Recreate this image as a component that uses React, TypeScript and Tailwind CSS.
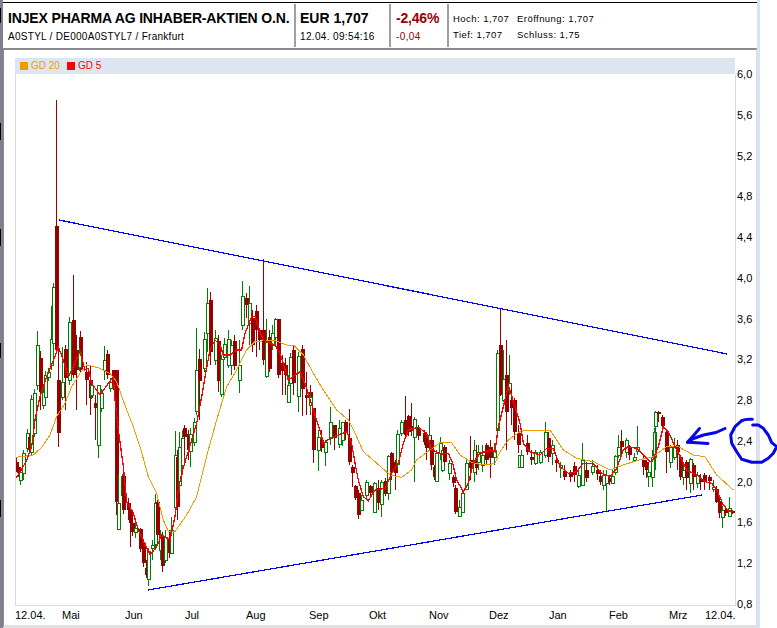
const blocks = [
  { gap: 8, h: 15 },
  { gap: 100, h: 17 },
  { gap: 89, h: 17 },
  { gap: 97, h: 15 },
  { gap: 142, h: 17 },
];

const yLabels = ["6,0", "5,6", "5,2", "4,8", "4,4", "4,0", "3,6", "3,2", "2,8", "2,4", "2,0", "1,6", "1,2", "0,8"];

const xLabels = [
  { text: "12.04.", w: 47 },
  { text: "Mai", w: 63 },
  { text: "Jun", w: 60 },
  { text: "Jul", w: 61 },
  { text: "Aug", w: 63 },
  { text: "Sep", w: 60 },
  { text: "Okt", w: 60 },
  { text: "Nov", w: 60 },
  { text: "Dez", w: 60 },
  { text: "Jan", w: 60 },
  { text: "Feb", w: 60 },
  { text: "Mrz", w: 36 },
  { text: "12.04.", w: 30 },
];

// [up, x, bodyTop, bodyBottom, wickTop, wickBottom] in page pixels
type Candle = [0 | 1, number, number, number, number?, number?];

const raw: Candle[] = [
  [0, 16, 462, 468], [0, 18, 467, 473], [1, 20, 472, 480, 472, 485], [1, 23, 453, 473, 450, 480], [1, 27, 433, 448], [0, 29, 437, 450], [1, 31, 399, 452], [1, 34, 393, 433], [1, 37, 345, 385, 331, 390], [0, 40, 358, 392, 351, 410],
  [1, 43, 392, 405], [1, 45, 375, 397], [1, 48, 372, 377], [1, 51, 339, 365, 306, 370], [1, 53, 287, 343], [0, 56, 226, 350, 100, 350], [0, 58, 380, 433, 350, 447], [1, 62, 382, 397, 347, 400], [0, 65, 349, 378, 345, 410], [1, 69, 322, 380, 317, 385], [0, 73, 320, 375, 275, 378], [0, 76, 350, 370, 335, 410], [0, 80, 337, 370, 331, 372], [1, 79, 352, 367], [0, 86, 372, 380, 362, 405],
  [0, 90, 380, 398, 365, 415], [1, 91, 385, 395], [0, 95, 403, 408, 395, 440], [1, 98, 385, 445, 395, 458], [1, 101, 393, 408], [1, 104, 360, 370, 346, 380], [0, 107, 354, 375], [1, 110, 382, 388], [0, 113, 370, 385, 370, 390], [0, 116, 370, 502, 370, 515], [1, 118, 503, 529, 475, 530], [1, 122, 476, 495, 474, 500], [0, 123, 476, 510], [0, 128, 503, 510, 498, 520], [0, 130, 510, 523, 505, 547],
  [0, 132, 523, 532], [1, 135, 528, 532, 520, 538], [0, 140, 529, 549, 528, 552], [0, 143, 543, 563], [0, 146, 568, 575, 560, 578], [1, 148, 551, 579, 548, 586], [1, 152, 545, 548, 540, 560], [1, 155, 503, 544, 494, 550], [0, 157, 502, 535, 500, 540], [1, 160, 535, 550, 530, 560], [0, 162, 536, 566, 532, 572], [1, 165, 537, 560, 530, 563], [0, 169, 538, 553, 530, 558], [1, 171, 530, 553, 517, 554], [1, 175, 455, 507, 431, 510], [0, 177, 457, 507, 450, 520], [1, 179, 447, 485, 432, 492], [1, 182, 438, 465, 430, 475], [0, 184, 428, 437, 425, 455], [0, 188, 434, 450, 430, 460], [1, 190, 434, 451, 428, 467], [1, 194, 422, 442],
  [1, 196, 370, 411, 328, 415], [0, 199, 359, 381, 349, 420], [1, 204, 339, 368, 332, 372], [1, 207, 303, 333, 288, 352], [0, 210, 300, 352, 292, 365], [1, 215, 338, 360, 330, 365], [0, 218, 341, 381, 335, 392], [1, 221, 359, 394, 355, 397], [1, 224, 344, 357, 338, 360], [1, 228, 339, 365, 330, 368], [1, 231, 345, 365, 340, 375], [0, 234, 341, 366, 335, 370], [1, 239, 365, 380, 340, 393], [1, 242, 296, 325, 281, 330], [0, 246, 298, 305, 293, 318], [1, 249, 303, 323, 286, 345],
  [0, 252, 318, 345, 310, 352], [0, 256, 311, 330, 305, 357], [0, 259, 330, 340, 330, 350], [0, 263, 330, 360, 259, 365], [1, 266, 342, 376, 319, 378], [0, 269, 337, 369, 330, 372], [1, 272, 333, 345, 325, 350], [1, 275, 319, 337, 318, 345], [0, 278, 319, 375, 319, 378], [0, 282, 363, 371, 355, 395], [0, 285, 365, 375, 358, 395], [1, 288, 385, 402, 375, 403], [1, 290, 357, 383], [0, 293, 350, 383, 345, 395], [1, 298, 356, 396, 352, 412], [0, 302, 349, 389, 345, 416], [0, 306, 395, 398, 372, 415], [0, 310, 392, 403, 385, 415], [1, 310, 397, 405, 392, 412], [0, 313, 408, 450, 408, 463], [1, 318, 437, 450, 430, 471], [0, 321, 440, 448, 430, 452], [1, 325, 442, 452, 440, 466],
  [1, 330, 422, 438, 407, 445], [0, 334, 425, 438, 425, 450], [1, 339, 428, 444, 420, 448], [1, 342, 422, 440, 422, 446], [0, 345, 422, 432, 420, 440], [0, 349, 438, 462, 409, 465], [0, 352, 467, 473, 465, 487], [0, 355, 486, 498, 485, 500], [0, 358, 493, 515, 490, 519], [1, 361, 500, 510, 495, 510], [1, 366, 482, 495, 480, 498], [0, 370, 486, 493, 485, 498], [1, 374, 483, 512, 482, 513], [0, 378, 488, 503, 480, 510], [1, 381, 482, 504, 480, 517], [0, 385, 481, 494, 478, 496], [1, 388, 456, 493, 455, 500], [0, 391, 453, 472, 452, 480], [0, 395, 462, 473, 460, 490], [1, 397, 434, 464, 430, 470], [1, 401, 422, 433, 420, 436],
  [0, 405, 420, 435, 396, 438], [0, 408, 416, 432, 415, 436], [0, 411, 426, 431, 403, 436], [1, 414, 419, 437, 417, 482], [0, 418, 428, 436, 425, 440], [0, 424, 433, 442, 430, 445], [0, 426, 436, 448, 433, 460], [1, 429, 435, 440, 417, 450], [0, 431, 440, 465, 435, 470], [0, 434, 467, 477, 465, 480], [1, 436, 453, 481, 450, 482], [1, 440, 443, 453, 437, 460], [1, 442, 450, 470, 442, 472], [0, 444, 447, 462, 445, 465], [1, 449, 463, 473, 460, 480], [0, 453, 477, 483, 475, 487], [0, 455, 488, 512, 485, 514], [1, 459, 507, 516, 500, 517], [1, 462, 493, 512, 490, 513], [1, 466, 463, 489, 460, 490], [0, 470, 460, 468, 436, 480], [1, 474, 450, 472, 440, 482], [0, 476, 458, 468, 445, 475], [1, 478, 452, 462, 445, 470], [1, 482, 455, 465, 445, 472], [0, 486, 445, 460, 443, 465], [0, 490, 447, 458, 440, 478], [1, 494, 450, 457, 443, 465],
  [1, 497, 353, 430, 350, 432], [0, 500, 345, 395, 308, 396], [1, 503, 379, 400, 350, 402], [0, 506, 375, 412, 340, 450], [1, 509, 383, 390, 355, 395], [0, 511, 400, 408, 388, 425], [0, 514, 400, 432, 398, 440], [0, 518, 433, 445, 425, 453], [1, 519, 455, 467, 455, 467], [1, 521, 455, 467, 450, 468], [0, 527, 443, 452, 435, 455], [0, 531, 457, 460, 450, 465], [1, 535, 452, 463, 450, 465], [1, 540, 452, 462, 450, 464], [1, 545, 432, 455, 422, 458], [0, 548, 438, 457, 432, 462], [1, 552, 445, 453, 440, 465], [0, 556, 460, 463, 455, 472], [1, 560, 465, 467, 462, 478],
  [0, 564, 471, 477, 465, 480], [0, 570, 473, 477, 470, 482], [0, 574, 466, 475, 462, 482], [1, 578, 475, 486, 470, 488], [1, 582, 460, 485, 443, 486], [0, 586, 470, 478, 462, 482], [1, 592, 466, 472, 460, 475], [0, 597, 470, 474, 465, 480], [0, 600, 476, 482, 470, 485], [1, 603, 475, 485, 470, 490], [1, 606, 475, 483, 470, 512], [0, 609, 478, 482, 475, 485], [1, 612, 476, 483, 470, 484], [1, 615, 456, 472, 455, 475], [1, 618, 447, 455, 435, 458], [0, 621, 441, 447, 430, 455], [1, 626, 440, 452, 438, 458], [0, 629, 447, 455, 445, 460], [1, 634, 457, 460, 453, 462], [1, 637, 447, 451, 426, 455], [0, 643, 460, 467, 455, 475], [0, 646, 462, 470, 460, 478], [1, 648, 472, 476, 465, 487], [1, 652, 457, 477, 450, 487],
  [1, 654, 432, 457, 428, 460], [1, 655, 412, 426, 411, 470], [0, 658, 412, 414, 411, 422], [0, 662, 417, 426, 415, 430], [0, 666, 432, 452, 430, 473], [1, 670, 447, 462, 445, 468], [1, 674, 447, 457, 438, 460], [0, 677, 445, 452, 440, 470], [0, 680, 457, 477, 455, 480], [1, 683, 470, 477, 465, 485], [0, 686, 462, 478, 460, 490], [1, 690, 459, 483, 458, 493], [0, 693, 465, 477, 463, 490], [1, 697, 475, 483, 472, 488], [0, 700, 480, 482, 474, 490], [0, 704, 475, 482, 473, 490], [0, 709, 477, 481, 475, 490], [1, 713, 487, 489, 480, 492], [0, 716, 489, 502, 486, 503], [0, 719, 501, 513, 498, 518], [1, 722, 510, 517, 506, 528], [0, 725, 510, 513, 508, 516], [1, 729, 508, 516, 497, 517], [0, 732, 511, 513, 510, 514],
];

const zoom = (ox: number, oy: number, pts: number[][]) => pts.map(([x, y]) => `${ox + x / 3},${oy + y / 3}`).join(" ");

const redLine = [
  zoom(0, 340, [[46, 415], [60, 398], [80, 360], [95, 320], [105, 240], [120, 170], [140, 110], [165, 50], [175, 20], [190, 60], [205, 110], [215, 90], [240, 35], [255, 90], [265, 85], [275, 130], [300, 165], [325, 130], [340, 110], [345, 180], [355, 270], [370, 380], [380, 485], [400, 520], [415, 570], [450, 645], [470, 620], [485, 585], [510, 600], [525, 530], [535, 450], [545, 400], [575, 300], [590, 250]]),
  zoom(180, 250, [[65, 440], [75, 380], [90, 300], [105, 270], [120, 285], [130, 315], [150, 315], [170, 300], [185, 300], [195, 250], [215, 200], [225, 200], [240, 245], [250, 270], [270, 280]]),
  zoom(260, 340, [[45, 15], [60, 40], [70, 70], [85, 120], [120, 95], [135, 130], [160, 210], [180, 270], [190, 310], [210, 295], [235, 285], [260, 275], [275, 310], [285, 370], [295, 420], [310, 470], [325, 482], [345, 450], [375, 445], [395, 400], [415, 370], [430, 310], [445, 270], [475, 262], [500, 280], [515, 330], [545, 342], [565, 340], [578, 370], [590, 420], [610, 455], [625, 430], [640, 370], [660, 340], [690, 330], [705, 335], [715, 260], [735, 180], [745, 135], [765, 200], [780, 250]]),
  zoom(520, 340, [[10, 310], [30, 335], [60, 345], [80, 325], [100, 325], [120, 380], [145, 400], [170, 395], [190, 370], [220, 370], [245, 400], [270, 410], [290, 385], [310, 330], [325, 320], [350, 325], [375, 350], [395, 368], [415, 320], [430, 260], [445, 275], [465, 320], [480, 350], [500, 390], [530, 405], [555, 425], [575, 430], [590, 450], [610, 495], [625, 512], [640, 515]]),
].join(" ");

const orangeLine = [
  zoom(0, 340, [[46, 352], [100, 345], [125, 322], [150, 285], [170, 230], [195, 190], [215, 140], [240, 100], [260, 75], [300, 85], [330, 100], [350, 125], [380, 210], [400, 260], [420, 320], [445, 410], [470, 460], [490, 540], [505, 575], [525, 575], [560, 525], [590, 470], [610, 390], [625, 330], [650, 240], [680, 140], [710, 90], [740, 30], [765, 5]]),
  zoom(260, 340, [[40, 0], [80, 15], [100, 15], [130, 45], [160, 100], [190, 150], [230, 210], [265, 240], [290, 290], [310, 335], [345, 365], [390, 405], [425, 412], [455, 390], [470, 360], [510, 330], [540, 308], [575, 308], [600, 345], [640, 370], [680, 375], [705, 370], [720, 335], [745, 300], [780, 275]]),
  zoom(520, 340, [[20, 270], [90, 270], [130, 330], [170, 355], [220, 365], [270, 390], [310, 375], [350, 362], [400, 350], [440, 320], [475, 320], [520, 345], [555, 350], [590, 405], [640, 450]]),
].join(" ");

function Chart() {
  return (
    <svg viewBox="16 74 719 531" className="block w-[719px] h-[531px]">
      <g shapeRendering="crispEdges">
        {raw.map(([up, x, top, bottom, wickTop, wickBottom], i) => {
          const color = up ? "#008000" : "#990000";
          const wt = wickTop ?? top - 4;
          const wb = wickBottom ?? bottom + 4;
          return (
            <g key={i}>
              <line x1={x + 0.5} x2={x + 0.5} y1={wt} y2={wb} stroke={color} strokeWidth={1} />
              {up ? (
                <rect x={x - 1} y={top} width={3} height={bottom - top} fill="#ffffff" stroke={color} strokeWidth={1} />
              ) : (
                <rect x={x - 1} y={top} width={3.5} height={bottom - top} fill={color} />
              )}
            </g>
          );
        })}
      </g>
      <g fill="none" shapeRendering="crispEdges">
        <polyline points={orangeLine} stroke="#f39a00" strokeWidth={1} />
        <polyline points={redLine} stroke="#ff0000" strokeWidth={1.3} />
      </g>
      <g stroke="#0000ff" strokeWidth={1.2} shapeRendering="crispEdges">
        <line x1={59} y1={220} x2={727} y2={354} />
        <line x1={148} y1={590} x2={702} y2={495} />
      </g>
    </svg>
  );
}

export default function App() {
  return (
    <div className="relative flex w-[777px] h-[628px] overflow-hidden bg-white text-black font-['Liberation_Sans',Arial,sans-serif]">
      <div className="w-[3px] h-full bg-[#7f7f8e] flex flex-col">
        {blocks.map((b, i) => (
          <div key={i} className="w-[1px] bg-black" style={{ marginTop: b.gap, height: b.h }} />
        ))}
      </div>

      <div className="w-[754px] h-full flex flex-col">
        <div className="h-[3px] border-b border-black mt-0 shrink-0" />
        <div className="h-[45px] flex shrink-0">
          <div className="w-[293px] pl-[5px] pt-[6px] border-r-2 border-[#a0a0a0] my-[1px]">
            <div className="text-[14px] leading-[17px] font-bold tracking-[-0.15px] whitespace-nowrap">INJEX PHARMA AG INHABER-AKTIEN O.N.</div>
            <div className="text-[10px] leading-[15px] mt-[2px] tracking-[0.28px] whitespace-nowrap">A0STYL / DE000A0STYL7 / Frankfurt</div>
          </div>
          <div className="w-[95px] pl-[4px] pt-[6px] border-r-2 border-[#a0a0a0] my-[1px]">
            <div className="text-[14px] leading-[17px] font-bold whitespace-nowrap">EUR 1,707</div>
            <div className="text-[10px] leading-[15px] mt-[2px] tracking-[0.35px] whitespace-nowrap">12.04. 09:54:16</div>
          </div>
          <div className="w-[58px] pl-[5px] pt-[6px] border-r-2 border-[#a0a0a0] my-[1px]">
            <div className="text-[14px] leading-[17px] font-bold tracking-[-0.2px] text-[#990000] whitespace-nowrap">-2,46%</div>
            <div className="text-[10px] leading-[15px] mt-[2px] tracking-[0.4px] text-[#990000]">-0,04</div>
          </div>
          <div className="pl-[4px] pt-[9px] grid grid-cols-[64px_auto] grid-rows-[16px_16px] text-[9.5px] tracking-[0.45px] whitespace-nowrap">
            <div>Hoch: 1,707</div>
            <div>Eröffnung: 1,707</div>
            <div>Tief: 1,707</div>
            <div>Schluss: 1,75</div>
          </div>
        </div>

        <div className="flex-1 flex border-t-2 border-l border-r border-b-3 border-t-[#8a8a8a] border-l-[#8a8a8a] border-r-[#dcdcdc] border-b-[#e0e0e0] pt-[8px] pl-[11px]">
          <div className="w-[720px] flex flex-col">
            <div className="h-[16px] bg-[#dce6f0] border-b border-[#e2e2e2] flex items-center pl-[5px] text-[10px]">
              <span className="w-[8px] h-[8px] bg-[#f39a00]" />
              <span className="ml-[3px] text-[#f39a00]">GD 20</span>
              <span className="ml-[7px] w-[8px] h-[8px] bg-[#ff0000]" />
              <span className="ml-[3px] text-[#ff0000]">GD 5</span>
            </div>
            <div className="border-l border-b border-r border-[#dcdcdc] w-[721px]">
              <Chart />
            </div>
            <div className="flex pt-[2px] text-[11px] leading-[14px] whitespace-nowrap">
              {xLabels.map((l, i) => (
                <div key={i} style={{ width: l.w }}>{l.text}</div>
              ))}
            </div>
          </div>
          <div className="ml-[2px] mt-[10px] h-[543px] flex flex-col justify-between text-[11px] leading-[13px]">
            {yLabels.map((l) => (
              <div key={l}>{l}</div>
            ))}
          </div>
        </div>
      </div>

      <div className="w-[3px] h-full bg-[#d5e3f3]" />
      <div className="flex-1 bg-white" />

      <svg viewBox="0 0 777 628" className="absolute inset-0 w-[777px] h-[628px] pointer-events-none">
        <g fill="none" stroke="#0505e6" strokeWidth={3} strokeLinecap="round" strokeLinejoin="round">
          <path d="M752.3 419.3 C748 419 744 419.5 741.7 420.7 L735 426.7 L730.7 435 L731.7 443.3 L736.7 451.7 L741.7 459.3 L751.7 462.3 L761.7 462.3 L768.3 458.3 L773.3 453.3 L776.7 446.7 L771.7 442.7 L768.3 435 L763.3 428.3 L758.3 425 L752.7 425" />
          <path d="M725 428.5 L716 432.5 L703.5 435 L693.5 438.5 L687.5 442.3" />
          <path d="M699.5 428.5 L694 435 L687.5 442.3 L697 442.8 L708 443.5" />
        </g>
      </svg>
    </div>
  );
}
